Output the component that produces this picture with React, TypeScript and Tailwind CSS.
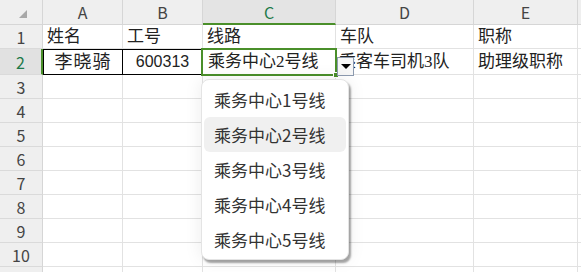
import React from "react";

const COLS = ["A", "B", "C", "D", "E", ""];
const SERIF = "font-['Liberation_Serif','Noto_Sans_CJK_SC',serif]";
const SANS = "font-['Noto_Sans_CJK_SC','Noto_Sans',sans-serif]";

const ROW1 = ["姓名", "工号", "线路", "车队", "职称", ""];
const OPTIONS = ["乘务中心1号线", "乘务中心2号线", "乘务中心3号线", "乘务中心4号线", "乘务中心5号线"];

function RowHead({ n, active }: { n?: number; active?: boolean }) {
  return (
    <div
      className={`flex items-center justify-center border-b border-[#dadada] text-[16px] ${SANS} ${
        active
          ? "bg-[#e1e1e1] text-[#1e7a4a] border-r-2 border-r-[#4a8f2a]"
          : "bg-[#efefef] text-[#444] border-r border-r-[#d6d6d6]"
      }`}
    >
      {n}
    </div>
  );
}

function Cell({ children, className = "" }: { children?: React.ReactNode; className?: string }) {
  return (
    <div className={`border-r border-b border-[#e2e2e2] flex items-center overflow-visible whitespace-nowrap ${className}`}>
      {children}
    </div>
  );
}

export default function App() {
  return (
    <div className="relative w-[581px] h-[272px] overflow-hidden bg-white text-[#222]">
      <div className="grid grid-cols-[43px_80px_80px_133px_138px_104px_1fr] grid-rows-[25px_24px_26px_repeat(9,24px)]">
        {/* corner */}
        <div className="relative bg-[#efefef] border-r border-b border-[#d6d6d6]">
          <div className="absolute left-[19px] top-[10px] w-0 h-0 border-l-[8px] border-l-transparent border-b-[8px] border-b-[#a8a8a8]" />
        </div>
        {COLS.map((c) => (
          <div
            key={c || "x"}
            className={`flex items-center justify-center text-[16px] ${SANS} border-r border-[#d6d6d6] ${
              c === "C"
                ? "bg-[#e4e4e4] text-[#1e7a4a] border-b-2 border-b-[#4a8f2a]"
                : "bg-[#efefef] text-[#444] border-b border-b-[#d6d6d6]"
            }`}
          >
            {c}
          </div>
        ))}

        {/* row 1 */}
        <RowHead n={1} />
        {ROW1.map((t, i) => (
          <Cell key={i} className={`pl-[4px] text-[17px] ${SERIF}`}>
            {t}
          </Cell>
        ))}

        {/* row 2 */}
        <RowHead n={2} active />
        <div className={`flex items-center justify-center border border-black text-[18px] tracking-[1px] ${SERIF}`}>李晓骑</div>
        <div className="flex items-center justify-center border-y border-r border-black text-[16px] font-['Liberation_Sans',sans-serif]">
          600313
        </div>
        <Cell className={`pl-[5px] text-[17px] ${SERIF}`}>乘务中心2号线</Cell>
        <Cell className={`pl-[3px] text-[17px] ${SERIF}`}>乘客车司机3队</Cell>
        <Cell className={`pl-[4px] text-[17px] ${SERIF}`}>助理级职称</Cell>
        <Cell />

        {[3, 4, 5, 6, 7, 8, 9, 10, 11].map((n) => (
          <React.Fragment key={n}>
            <RowHead n={n < 11 ? n : undefined} />
            {COLS.map((c) => (
              <Cell key={c || "x"} />
            ))}
          </React.Fragment>
        ))}
      </div>

      {/* active cell border */}
      <div className="absolute left-[201px] top-[48px] w-[136px] h-[28px] border-[2px] border-[#4a8f2a] pointer-events-none">
        <div className="absolute right-[-4px] bottom-[-4px] w-[6px] h-[6px] bg-[#4a8f2a] border border-white" />
      </div>

      {/* dropdown button */}
      <div className="absolute left-[337px] top-[57px] w-[17px] h-[19px] bg-[#f7f7f7] border border-[#8d9bb0] flex items-center justify-center">
        <div className="w-0 h-0 border-l-[5px] border-r-[5px] border-t-[5px] border-l-transparent border-r-transparent border-t-black" />
      </div>

      {/* dropdown list */}
      <div className="absolute left-[201px] top-[79px] w-[148px] p-[2px] bg-white rounded-[8px] border border-[#e4e4e4] shadow-[2px_3px_2px_rgba(0,0,0,0.35),0_0_18px_rgba(0,0,0,0.08)]">
        {OPTIONS.map((o, i) => (
          <div
            key={o}
            className={`h-[35px] flex items-center pl-[10px] rounded-[6px] text-[17px] text-[#333] ${SANS} ${
              i === 1 ? "bg-[#f0f0f0]" : ""
            }`}
          >
            {o}
          </div>
        ))}
      </div>
    </div>
  );
}
